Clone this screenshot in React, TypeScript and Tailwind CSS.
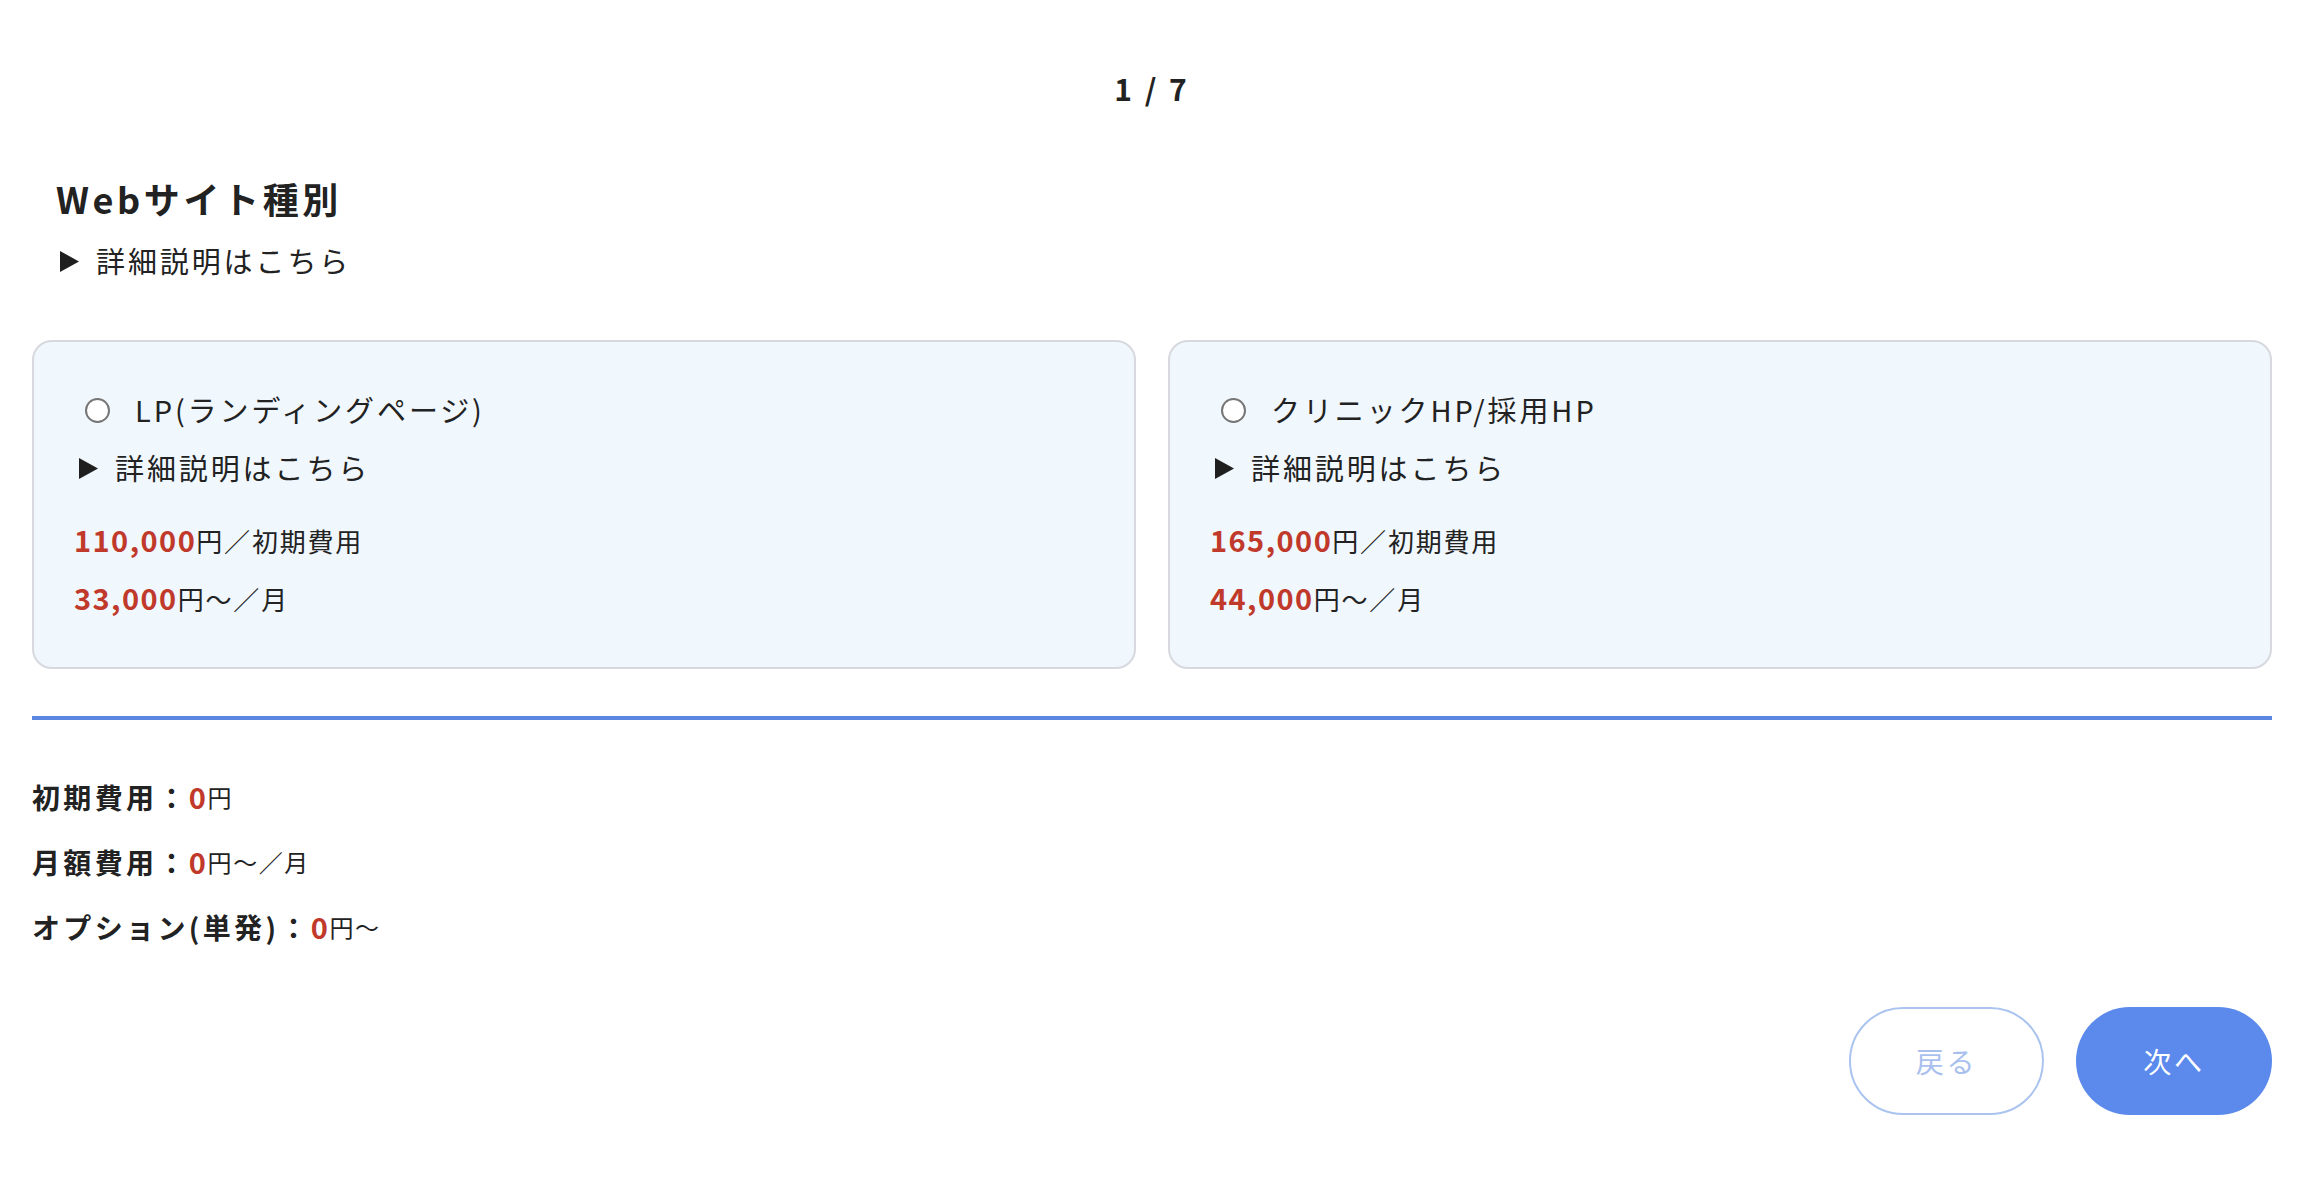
import * as React from "react"

type Plan = {
    name: string
    initial: string
    monthly: string
}

const plans: Plan[] = [
    { name: "LP(ランディングページ)", initial: "110,000", monthly: "33,000" },
    { name: "クリニックHP/採用HP", initial: "165,000", monthly: "44,000" },
]

function Triangle () {
    return (
        <svg width="21" height="23" viewBox="0 0 21 23" className="shrink-0">
            <path d="M1 1 L20 11.5 L1 22 Z" fill="#1f1f1f" />
        </svg>
    )
}

function DetailToggle () {
    return (
        <div className="flex items-center gap-[16px] h-[40px] text-[29px] tracking-[0.1em] text-[#222]">
            <Triangle />
            <span>詳細説明はこちら</span>
        </div>
    )
}

function PlanCard ({ plan }: { plan: Plan }) {
    return (
        <label className="flex flex-col rounded-[20px] border-2 border-[#d7d9de] bg-[#f0f7fd] pl-[40px] pt-[44px] pb-[47px] cursor-pointer">
            <div className="flex items-center h-[48px]">
                <span className="ml-[11px] w-[25px] h-[25px] rounded-full border-2 border-[#767676] bg-white shrink-0" />
                <span className="ml-[25px] text-[29px] tracking-[0.1em] text-[#222]">{plan.name}</span>
            </div>
            <div className="mt-[14px] pl-[4px]">
                <DetailToggle />
            </div>
            <p className="mt-[30px] h-[44px] flex items-center text-[#222]">
                <span className="text-[29px] font-bold tracking-[0.05em] text-[#c0392b]">{plan.initial}</span>
                <span className="text-[26px] tracking-[0.07em]">円／初期費用</span>
            </p>
            <p className="mt-[14px] h-[44px] flex items-center text-[#222]">
                <span className="text-[29px] font-bold tracking-[0.05em] text-[#c0392b]">{plan.monthly}</span>
                <span className="text-[26px] tracking-[0.07em]">円～／月</span>
            </p>
        </label>
    )
}

function SummaryRow ({ label, unit }: { label: string, unit: string }) {
    return (
        <p className="flex items-center h-[48px] tracking-[0.1em] text-[#222]">
            <span className="text-[28px] font-bold tracking-[0.12em]">{label}</span>
            <span className="text-[29px] font-bold text-[#c0392b]">0</span>
            <span className="text-[24px]">{unit}</span>
        </p>
    )
}

export default function App () {
    return (
        <div
            className="min-h-screen bg-white pl-8 pr-10 pt-[68px] pb-16"
            style={{ fontFamily: '"Noto Sans CJK JP", "Noto Sans", sans-serif' }}
        >
            <p className="text-center text-[30px] leading-[40px] font-bold tracking-[0.1em] text-[#222]">1 / 7</p>

            <div className="px-6 mt-[66px]">
                <h2 className="text-[36px] leading-[48px] font-bold tracking-[0.1em] text-[#222]">Webサイト種別</h2>
                <div className="mt-[19px] pl-[3px]">
                    <DetailToggle />
                </div>
            </div>

            <div className="grid grid-cols-2 gap-8 mt-[59px]">
                {plans.map((plan) => (
                    <PlanCard key={plan.name} plan={plan} />
                ))}
            </div>

            <div className="mt-[47px] h-[4px] bg-[#5b87e0]" />

            <div className="mt-[53px] flex flex-col gap-[17px]">
                <SummaryRow label="初期費用：" unit="円" />
                <SummaryRow label="月額費用：" unit="円～／月" />
                <SummaryRow label="オプション(単発)：" unit="円～" />
            </div>

            <div className="mt-[56px] flex justify-end gap-8">
                <button className="w-[195px] h-[108px] rounded-full border-2 border-[#aac4ef] bg-white text-[28px] tracking-[0.1em] text-[#a9c0ef]">
                    戻る
                </button>
                <button className="w-[196px] h-[108px] rounded-full bg-[#5b8aec] text-[28px] tracking-[0.1em] text-white">
                    次へ
                </button>
            </div>
        </div>
    )
}
